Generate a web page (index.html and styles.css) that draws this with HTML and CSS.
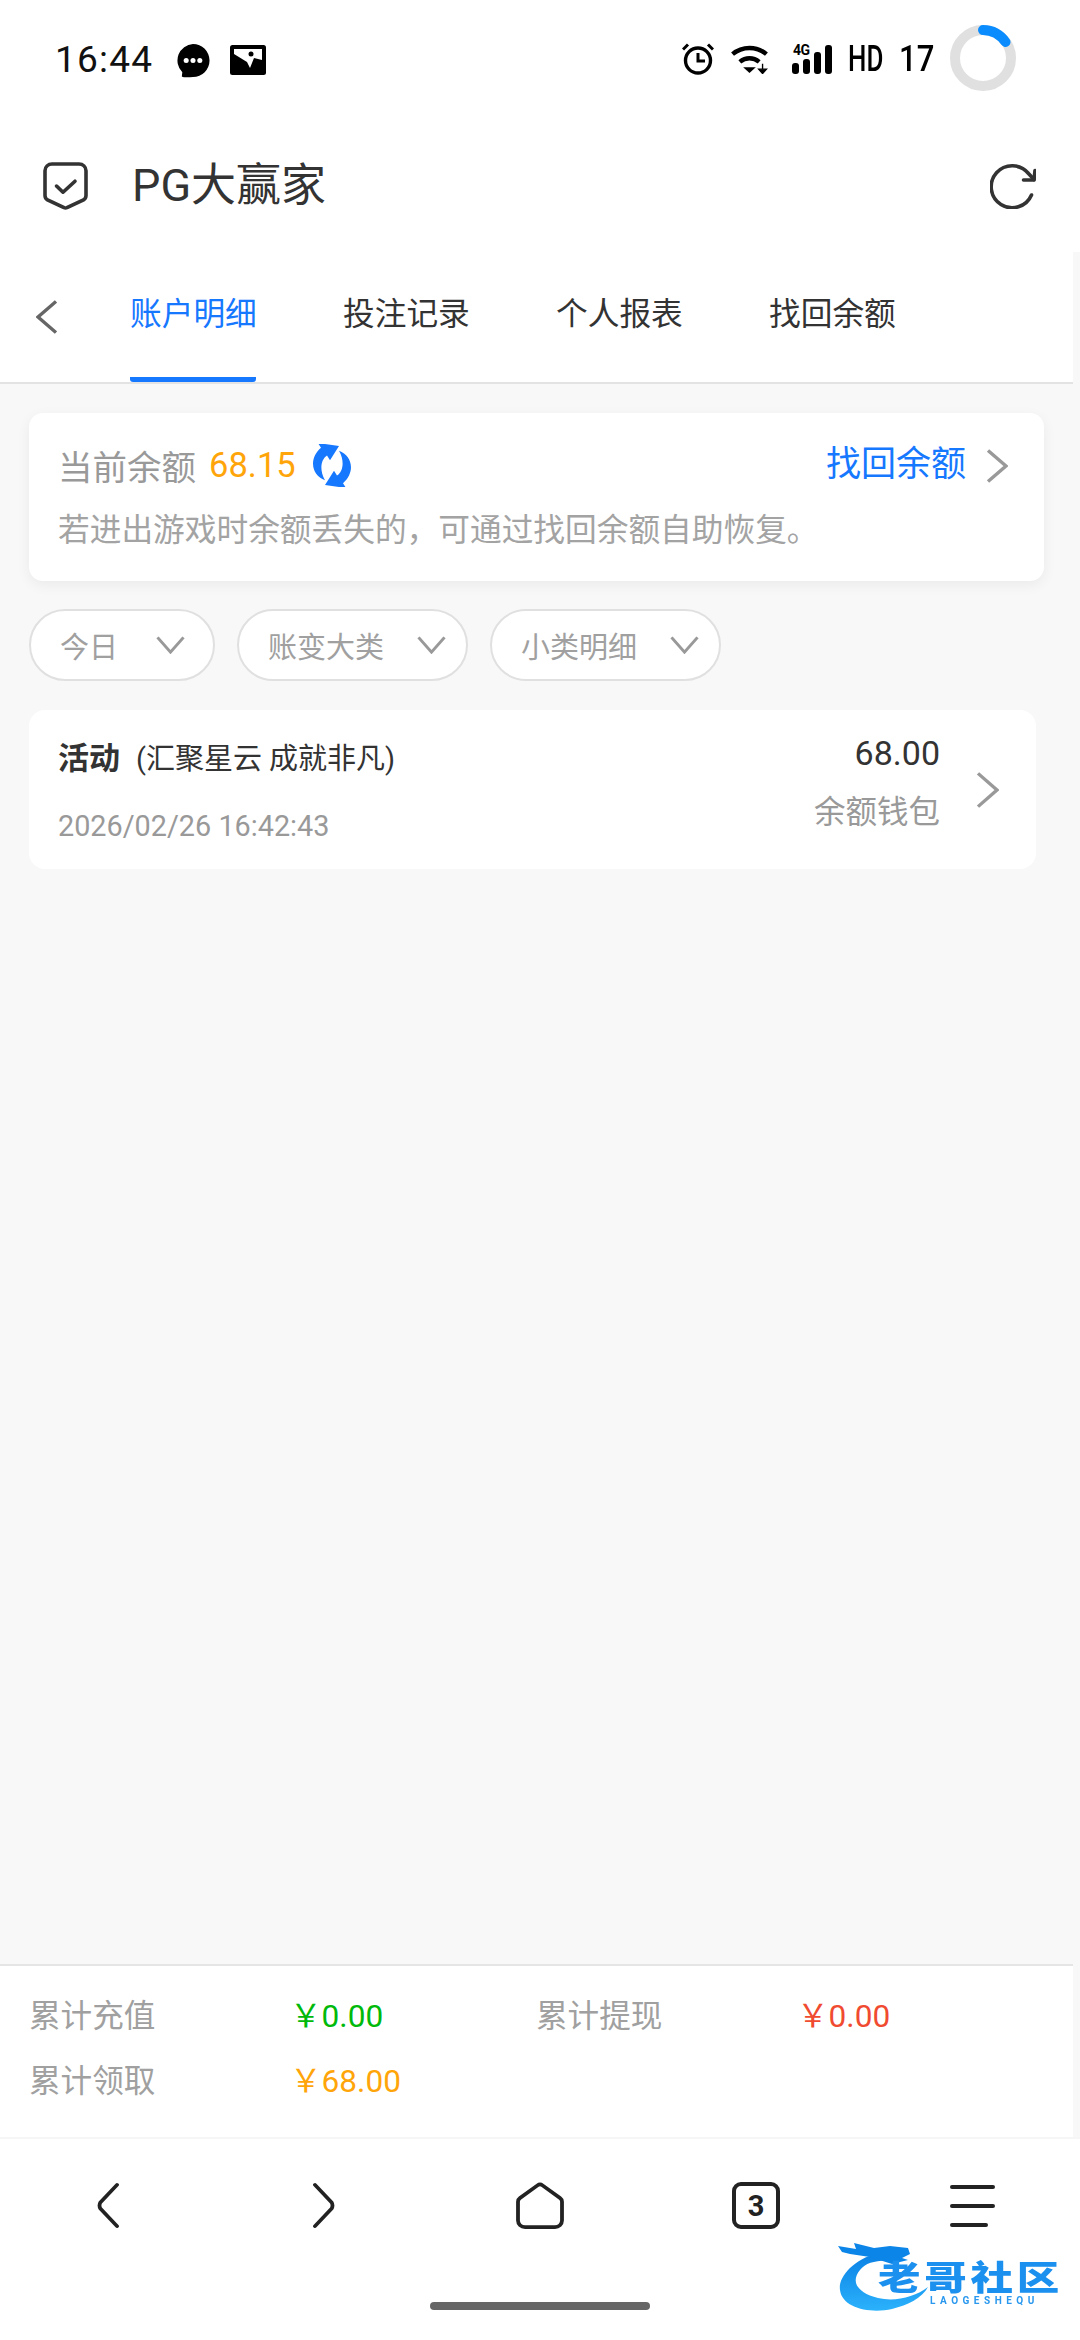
FILE: index.html
```html
<!DOCTYPE html>
<html lang="zh-CN">
<head>
    <meta charset="UTF-8">
    <meta name="viewport" content="width=device-width, initial-scale=1.0">
    <title>PG大赢家</title>
    <link rel="stylesheet" href="styles.css">
</head>
<body>

    <div class="phone">

        <!-- Status bar -->
        <div class="status-bar">
            <div class="status-left">
                <span class="time">16:44</span>
                <svg class="icon-msg" viewBox="0 0 34 36">
                    <path d="M17 1a17 17 0 1 1 0 34c-4 .3-9 .8-11.500-.5L6 30A17 17 0 0 1 17 1z" fill="#000"/>
                    <circle cx="10" cy="18" r="2.600" fill="#fff"/>
                    <circle cx="17" cy="18" r="2.600" fill="#fff"/>
                    <circle cx="24" cy="18" r="2.600" fill="#fff"/>
                </svg>
                <svg class="icon-pic" viewBox="0 0 36 30">
                    <rect width="36" height="30" rx="2.500" fill="#000"/>
                    <path d="M4 4h28v11l-8-2-4 10-3-6L4 9z" fill="#fff"/>
                    <circle cx="21" cy="9" r="2.500" fill="#000"/>
                </svg>
            </div>
            <div class="status-right">
                <svg class="icon-alarm" viewBox="0 0 32 32">
                    <circle cx="16" cy="17.500" r="12.500" fill="none" stroke="#000" stroke-width="3.400"/>
                    <path d="M16 10v8h7" fill="none" stroke="#000" stroke-width="3"/>
                    <path d="M1 6.500 6 1.500M31 6.500 26 1.500" stroke="#000" stroke-width="3"/>
                </svg>
                <svg class="icon-wifi" viewBox="0 0 39 31">
                    <path d="M2 10.500C12 2 27 2 37 10.500" fill="none" stroke="#000" stroke-width="4.600"/>
                    <path d="M9.500 18.500c6-5 14-5 20 0" fill="none" stroke="#000" stroke-width="4.600"/>
                    <path d="M13 24h13l-6.500 6z" fill="#000"/>
                    <path d="M33 20.500v6M29 26h8l-4 4.500z" fill="#000" stroke="#000" stroke-width="1.400"/>
                </svg>
                <div class="signal">
                    <span class="signal-4g">4G</span>
                    <span class="bar bar-1"></span>
                    <span class="bar bar-2"></span>
                    <span class="bar bar-3"></span>
                    <span class="bar bar-4"></span>
                </div>
                <span class="hd"><span>HD</span></span>
                <span class="battery-num"><span>17</span></span>
                <svg class="ring" viewBox="0 0 66 66">
                    <circle cx="33" cy="33" r="28" fill="none" stroke="#e0e0e0" stroke-width="10"/>
                    <path d="M33 5A28 28 0 0 1 55.500 17" fill="none" stroke="#0a8cff" stroke-width="10" stroke-linecap="round"/>
                </svg>
            </div>
        </div>

        <!-- Browser title -->
        <div class="title-bar">
            <svg class="icon-shield" viewBox="0 0 45 50" preserveAspectRatio="none">
                <path d="M9 2h27a7 7 0 0 1 7 7v26q0 3-2.500 4.500L24 47.500q-1.500 1-3 0L4.500 39.500Q2 38 2 35V9a7 7 0 0 1 7-7z" fill="none" stroke="#333" stroke-width="3.600"/>
                <path d="M13.500 25l6.500 6.500L32 20" fill="none" stroke="#333" stroke-width="3.600" stroke-linecap="round" stroke-linejoin="round"/>
            </svg>
            <span class="title-text">PG大赢家</span>
            <svg class="icon-reload" viewBox="0 0 46 46">
                <path d="M41.500 32A21 21 0 1 1 38.500 10.500L44 16.500" fill="none" stroke="#333" stroke-width="3.600" stroke-linecap="round"/>
                <path d="M45 7.500 44 17 33.500 17" fill="none" stroke="#333" stroke-width="3.600" stroke-linecap="round" stroke-linejoin="round"/>
            </svg>
        </div>

        <div class="webview">
            <div class="page">

                <div class="tabs">
                    <svg class="tabs-back" viewBox="0 0 21 35" preserveAspectRatio="none">
                        <path d="M20 1.500 2 17.500l18 16" fill="none" stroke="#666" stroke-width="3.400"/>
                    </svg>
                    <span class="tab active">账户明细</span>
                    <span class="tab">投注记录</span>
                    <span class="tab">个人报表</span>
                    <span class="tab">找回余额</span>
                </div>

                <div class="content">
                    <div class="balance-card">
                        <div class="balance-top">
                            <span class="balance-label">当前余额</span>
                            <span class="balance-value">68.15</span>
                            <svg class="icon-sync" viewBox="8 6 42 45" preserveAspectRatio="none">
                                <path d="M15 5 36 8 27 23 24 18C18 22 16 33 22 44 9 39 5 22 18 10z" fill="#1677ff"/>
                                <path d="M15 5 36 8 27 23 24 18C18 22 16 33 22 44 9 39 5 22 18 10z" fill="#1677ff" transform="rotate(180 29 28.500)"/>
                            </svg>
                            <span class="recover-link">找回余额</span>
                            <svg class="chevron-right" viewBox="0 0 22 35" preserveAspectRatio="none">
                                <path d="M2 1.500 20 17.500l-18 16" fill="none" stroke="#999" stroke-width="3.400"/>
                            </svg>
                        </div>
                        <div class="balance-tip">若进出游戏时余额丢失的，可通过找回余额自助恢复。</div>
                    </div>

                    <div class="filters">
                        <div class="pill pill-short">
                            <span>今日</span>
                            <svg class="pill-arrow" viewBox="0 0 29 19" preserveAspectRatio="none"><path d="M1.500 1.500 14.500 17 27.500 1.500" fill="none" stroke="#999" stroke-width="3"/></svg>
                        </div>
                        <div class="pill">
                            <span>账变大类</span>
                            <svg class="pill-arrow" viewBox="0 0 29 19" preserveAspectRatio="none"><path d="M1.500 1.500 14.500 17 27.500 1.500" fill="none" stroke="#999" stroke-width="3"/></svg>
                        </div>
                        <div class="pill">
                            <span>小类明细</span>
                            <svg class="pill-arrow" viewBox="0 0 29 19" preserveAspectRatio="none"><path d="M1.500 1.500 14.500 17 27.500 1.500" fill="none" stroke="#999" stroke-width="3"/></svg>
                        </div>
                    </div>

                    <div class="record-card">
                        <div class="record-left">
                            <div class="record-title"><b>活动</b><span>(汇聚星云 成就非凡)</span></div>
                            <div class="record-date">2026/02/26 16:42:43</div>
                        </div>
                        <div class="record-right">
                            <div class="record-amount">68.00</div>
                            <div class="record-wallet">余额钱包</div>
                        </div>
                        <svg class="record-chevron" viewBox="0 0 23 38" preserveAspectRatio="none">
                            <path d="M2 1.500 21 19 2 36.500" fill="none" stroke="#999" stroke-width="3.400"/>
                        </svg>
                    </div>
                </div>

                <!-- Totals -->
                <div class="totals">
                    <div class="totals-row">
                        <span class="totals-label">累计充值</span>
                        <span class="totals-value green">￥0.00</span>
                        <span class="totals-label">累计提现</span>
                        <span class="totals-value red">￥0.00</span>
                    </div>
                    <div class="totals-row">
                        <span class="totals-label">累计领取</span>
                        <span class="totals-value orange">￥68.00</span>
                    </div>
                </div>
            </div>
        </div>

        <!-- Browser navigation -->
        <div class="nav">
            <div class="nav-icons">
                <svg class="nav-chevron" viewBox="0 0 22 50" preserveAspectRatio="none">
                    <path d="M20 3 3.500 21.500Q1.500 25 3.500 28.500L20 47" fill="none" stroke="#222" stroke-width="3.800" stroke-linecap="round"/>
                </svg>
                <svg class="nav-chevron" viewBox="0 0 22 50" preserveAspectRatio="none">
                    <path d="M2 3 18.500 21.500Q20.500 25 18.500 28.500L2 47" fill="none" stroke="#222" stroke-width="3.800" stroke-linecap="round"/>
                </svg>
                <svg class="nav-home" viewBox="0 0 48 50" preserveAspectRatio="none">
                    <path d="M21.500 3.500 4 17q-2 1.500-2 4v20a7 7 0 0 0 7 7h30a7 7 0 0 0 7-7V21q0-2.500-2-4L26.500 3.500q-2.500-2-5 0z" fill="none" stroke="#222" stroke-width="3.800"/>
                </svg>
                <div class="nav-tabs">3</div>
                <div class="nav-menu">
                    <span></span>
                    <span></span>
                    <span class="short"></span>
                </div>
            </div>
            <div class="home-bar"></div>

            <!-- Watermark -->
            <div class="logo">
                <svg class="logo-dragon" viewBox="0 0 240 90">
                    <defs>
                        <linearGradient id="dragon" x1="0" y1="0" x2="0" y2="1">
                            <stop offset="0" stop-color="#0a80e4"/>
                            <stop offset="1" stop-color="#2bb2fc"/>
                        </linearGradient>
                    </defs>
                    <path d="M48 13C22 20 8 38 10 50 12 68 40 74 62 69 78 65 92 58 98 47 85 57 65 62 48 58 28 53 20 42 30 30 36 22 48 20 62 21z" fill="url(#dragon)"/>
                    <path d="M8 6 26 9 24 3 44 8 60 6 78 8 80 14 72 18 78 20 62 24 40 17 20 14 12 12z" fill="#0c85e8"/>
                </svg>
                <span class="logo-name">老哥社区</span>
                <span class="logo-sub">LAOGESHEQU</span>
            </div>
        </div>

    </div>

</body>
</html>
```

FILE: styles.css
```css
* {
    box-sizing: border-box;
}

html, body {
    margin: 0;
    padding: 0;
    background-color: #fff;
}

body {
    font-family: Roboto, "Noto Sans CJK SC", sans-serif;
}

svg {
    display: block;
    flex-shrink: 0;
}

.phone {
    width: 1080px;
    height: 2340px;
    display: flex;
    flex-direction: column;
    overflow: hidden;
}

/* Status bar */
.status-bar {
    height: 115px;
    flex-shrink: 0;
    display: flex;
    justify-content: space-between;
    align-items: center;
    padding: 0 64px 0 55px;
}

.status-left {
    display: flex;
    align-items: center;
    padding-top: 5px;
}

.time {
    font-size: 37px;
    line-height: 44px;
    letter-spacing: 1.2px;
    color: #111;
    width: 121px;
}

.icon-msg {
    width: 34px;
    height: 35px;
}

.icon-pic {
    width: 36px;
    height: 30px;
    margin-left: 20px;
}

.status-right {
    display: flex;
    align-items: center;
    gap: 16px;
}

.icon-alarm {
    width: 32px;
    height: 32px;
    margin-top: 3px;
}

.icon-wifi {
    width: 39px;
    height: 30px;
    margin-top: 3px;
}

.signal {
    position: relative;
    width: 40px;
    height: 30px;
    margin: 3px 0 0 7px;
}

.signal-4g {
    position: absolute;
    left: 1px;
    top: -2px;
    font-size: 14px;
    line-height: 16px;
    font-weight: 700;
    color: #000;
    letter-spacing: -0.5px;
}

.bar {
    position: absolute;
    bottom: 0;
    width: 7px;
    border-radius: 3px;
    background-color: #000;
}

.bar-1 {
    left: 0;
    height: 11px;
}

.bar-2 {
    left: 11px;
    height: 15px;
}

.bar-3 {
    left: 22px;
    height: 22px;
}

.bar-4 {
    left: 33px;
    height: 29px;
}

.hd, .battery-num {
    width: 35px;
    height: 44px;
    margin-top: 3px;
    font-size: 37px;
    line-height: 44px;
    font-weight: 500;
    color: #000;
    white-space: nowrap;
}

.hd span, .battery-num span {
    display: inline-block;
    transform-origin: left center;
}

.hd span {
    transform: scaleX(0.7);
}

.battery-num span {
    transform: scaleX(0.84);
}

.ring {
    width: 66px;
    height: 66px;
}

/* Title bar */
.title-bar {
    height: 137px;
    flex-shrink: 0;
    display: flex;
    align-items: center;
    padding: 4px 44px 0 43px;
}

.icon-shield {
    width: 45px;
    height: 48px;
}

.title-text {
    flex: 1;
    margin-left: 44px;
    font-size: 45px;
    line-height: 56px;
    color: #333;
}

.icon-reload {
    width: 46px;
    height: 46px;
}

/* Web page */
.webview {
    flex: 1;
    min-height: 0;
    display: flex;
    background-color: #f8f8f8;
}

.page {
    width: 1073px;
    display: flex;
    flex-direction: column;
}

.tabs {
    display: flex;
    align-items: flex-start;
    background-color: #fff;
    padding-left: 36px;
    border-bottom: 2px solid #e3e3e3;
}

.tabs-back {
    width: 21px;
    height: 34px;
    margin: 48px 73px 0 0;
}

.tab {
    width: 126px;
    margin-right: 87px;
    padding: 41px 0 40px;
    font-size: 31.700px;
    line-height: 44px;
    color: #333;
    white-space: nowrap;
    border-bottom: 5px solid transparent;
}

.tab.active {
    color: #1677ff;
    border-bottom-color: #1677ff;
    border-radius: 0 0 3px 3px;
}

.content {
    flex: 1;
    padding: 29px 29px 16px;
}

.balance-card {
    background-color: #fff;
    border-radius: 14px;
    padding: 30px 36px 27px 29px;
    box-shadow: 0 4px 14px rgba(0, 0, 0, 0.06);
}

.balance-top {
    display: flex;
    align-items: center;
    height: 46px;
}

.balance-label {
    font-size: 34.500px;
    line-height: 46px;
    color: #999;
    margin-top: 4px;
}

.balance-value {
    font-size: 34.500px;
    line-height: 46px;
    color: #ffa50a;
    margin: -3px 0 0 13px;
}

.icon-sync {
    width: 42px;
    height: 43px;
    margin: -1px 0 0 15px;
}

.recover-link {
    margin: -2px 0 0 auto;
    font-size: 35px;
    line-height: 46px;
    color: #1677ff;
}

.chevron-right {
    width: 22px;
    height: 34px;
    margin-left: 20px;
}

.balance-tip {
    margin-top: 19px;
    font-size: 31.700px;
    line-height: 46px;
    color: #a3a3a3;
    white-space: nowrap;
}

.filters {
    display: flex;
    gap: 22px;
    margin-top: 28px;
}

.pill {
    width: 231px;
    height: 72px;
    display: flex;
    align-items: center;
    justify-content: space-between;
    padding: 0 20px 0 29px;
    background-color: #fff;
    border: 2px solid #e0e0e0;
    border-radius: 36px;
    font-size: 29px;
    color: #a0a0a0;
}

.pill-short {
    width: 186px;
    padding-right: 28px;
}

.pill-arrow {
    width: 29px;
    height: 18px;
    margin-top: -1px;
}

.record-card {
    display: flex;
    align-items: flex-start;
    height: 159px;
    margin: 29px 8px 0 0;
    padding: 0 37px 0 29px;
    background-color: #fff;
    border-radius: 16px;
}

.record-left {
    flex: 1;
    padding-top: 27px;
}

.record-title {
    line-height: 44px;
    font-size: 29px;
    color: #333;
}

.record-title b {
    font-size: 31px;
    font-weight: 700;
    margin-right: 16px;
}

.record-date {
    margin-top: 25px;
    font-size: 28.800px;
    line-height: 40px;
    color: #999;
}

.record-right {
    padding-top: 21px;
    text-align: right;
}

.record-amount {
    font-size: 34px;
    line-height: 44px;
    color: #333;
}

.record-wallet {
    margin-top: 18px;
    font-size: 31.500px;
    line-height: 40px;
    color: #999;
}

.record-chevron {
    width: 23px;
    height: 36px;
    margin: 62px 0 0 36px;
}

/* Totals */
.totals {
    flex-shrink: 0;
    background-color: #fff;
    border-top: 2px solid #e5e5e5;
    padding: 29px 0 33px 29px;
}

.totals-row {
    display: flex;
    line-height: 44px;
    font-size: 31.600px;
    white-space: nowrap;
}

.totals-row + .totals-row {
    margin-top: 21px;
}

.totals-label {
    width: 261px;
    color: #a0a0a0;
}

.totals-value {
    width: 246px;
}

.green {
    color: #00b90a;
}

.red {
    color: #f04b30;
}

.orange {
    color: #ffa50a;
}

/* Browser navigation */
.nav {
    position: relative;
    height: 203px;
    flex-shrink: 0;
    border-top: 2px solid #f6f6f6;
    background-color: #fff;
    padding-top: 43px;
}

.nav-icons {
    display: grid;
    grid-template-columns: repeat(5, 216px);
    justify-items: center;
    align-items: center;
    height: 47px;
}

.nav-chevron {
    width: 22px;
    height: 47px;
}

.nav-home {
    width: 48px;
    height: 47px;
}

.nav-tabs {
    width: 48px;
    height: 47px;
    display: flex;
    align-items: center;
    justify-content: center;
    border: 4px solid #222;
    border-radius: 9px;
    font-size: 29px;
    font-weight: 700;
    color: #222;
}

.nav-menu {
    width: 45px;
    display: flex;
    flex-direction: column;
    gap: 15px;
}

.nav-menu span {
    height: 4px;
    border-radius: 2px;
    background-color: #222;
}

.nav-menu .short {
    width: 38px;
}

.home-bar {
    width: 220px;
    height: 8px;
    margin: 73px auto 0;
    border-radius: 4px;
    background-color: #666;
}

/* Watermark over the nav bar */
.logo {
    position: absolute;
    left: 830px;
    top: 101px;
    width: 240px;
    height: 90px;
    filter: blur(0.5px);
}

.logo-dragon {
    position: absolute;
    left: 0;
    top: 0;
    width: 240px;
    height: 90px;
}

.logo-name {
    position: absolute;
    left: 48px;
    top: 21px;
    font-size: 34px;
    line-height: 34px;
    font-weight: 900;
    letter-spacing: 3px;
    color: #1b90ee;
    white-space: nowrap;
    transform: scaleX(1.25);
    transform-origin: left center;
}

.logo-sub {
    position: absolute;
    left: 100px;
    top: 55px;
    font-size: 10px;
    line-height: 12px;
    font-weight: 700;
    letter-spacing: 4.500px;
    color: #2a98ee;
    white-space: nowrap;
}
```
